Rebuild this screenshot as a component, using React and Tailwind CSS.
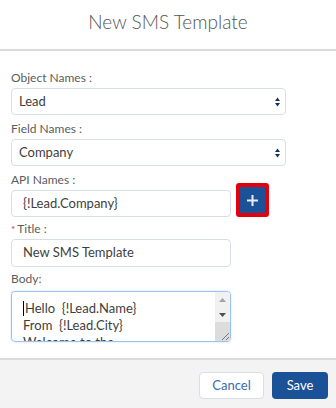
import React from "react";

const font = { fontFamily: 'Lato, "Open Sans", "Liberation Sans", sans-serif' };

function Arrows() {
  return (
    <svg width="5" height="10" viewBox="0 0 5 10" className="shrink-0">
      <path d="M2.5 0.5 L5 4 L0 4 Z" fill="#16325c" />
      <path d="M0 6 L5 6 L2.5 9.5 Z" fill="#16325c" />
    </svg>
  );
}

function Select({ value }) {
  return (
    <div className="h-[27px] w-[275px] flex items-center justify-between border border-[#d8dde6] rounded-[4px] bg-white pl-[7px] pr-[5px] text-[13px] text-[#3e3e3c]">
      <span>{value}</span>
      <Arrows />
    </div>
  );
}

function Label({ children }) {
  return <div className="h-[20px] leading-[20px] text-[12px] text-[#5c5c5c]">{children}</div>;
}

export default function App() {
  return (
    <div className="w-[336px] h-[408px] flex flex-col bg-white overflow-hidden" style={font}>
      <div className="h-[51px] shrink-0 flex items-center justify-center border-b-2 border-[#dddbda] pb-[5px]">
        <span className="text-[19px] font-light text-[#555555]">New SMS Template</span>
      </div>
      <div className="flex-1 pl-[11px] pt-[17px]">
        <Label>Object Names :</Label>
        <Select value="Lead" />
        <div className="mt-[4px]">
          <Label>Field Names :</Label>
        </div>
        <Select value="Company" />
        <div className="mt-[4px] flex items-end gap-[5px]">
          <div className="flex flex-col">
            <Label>API Names :</Label>
            <div className="h-[27px] w-[220px] flex items-center border border-[#d8dde6] rounded-[4px] pl-[11px] text-[13px] text-[#3e3e3c]">
              {"{!Lead.Company}"}
            </div>
          </div>
          <div className="w-[33px] h-[34px] rounded-[3px] bg-[#e3000b] p-[4px]">
            <div className="w-full h-full bg-[#1b5297] flex items-center justify-center">
              <svg width="11" height="11" viewBox="0 0 11 11">
                <path d="M5.5 0 V11 M0 5.5 H11" stroke="#e8ecf2" strokeWidth="2" />
              </svg>
            </div>
          </div>
        </div>
        <div className="mt-[2px]">
          <Label>
            <span className="text-[#c23934] text-[10px] mr-[2px] align-top">*</span>Title :
          </Label>
        </div>
        <div className="h-[28px] w-[220px] flex items-center border border-[#d8dde6] rounded-[4px] pl-[11px] text-[13px] text-[#3e3e3c]">
          New SMS Template
        </div>
        <div className="mt-[2px]">
          <Label>Body:</Label>
        </div>
        <div className="mt-[2px] h-[51px] w-[220px] flex border border-[#9fc3ee] rounded-[4px] overflow-hidden shadow-[0_0_2px_#b7d3f3]">
          <div className="flex-1 pl-[11px] pt-[8px] text-[13px] leading-[17px] text-[#3e3e3c] overflow-hidden whitespace-pre">
            <div className="flex items-center">
              <span className="inline-block w-px h-[15px] bg-black mr-px"></span>
              <span>{"Hello  {!Lead.Name}"}</span>
            </div>
            <div>{"From  {!Lead.City}"}</div>
            <div>{"Welcome to the"}</div>
          </div>
          <div className="w-[15px] flex flex-col bg-[#f1f1f1]">
            <div className="h-[15px] flex items-center justify-center">
              <svg width="7" height="4" viewBox="0 0 7 4"><path d="M3.5 0 L7 4 L0 4 Z" fill="#a3a3a3" /></svg>
            </div>
            <div className="h-[15px] flex items-center justify-center">
              <svg width="7" height="4" viewBox="0 0 7 4"><path d="M0 0 L7 0 L3.5 4 Z" fill="#505050" /></svg>
            </div>
            <div className="flex-1 bg-[#dcdcdc] flex items-end justify-end">
              <svg width="10" height="10" viewBox="0 0 10 10">
                <path d="M9 2 L2 9 M9 6 L6 9" stroke="#7a7a7a" strokeWidth="1" />
              </svg>
            </div>
          </div>
        </div>
      </div>
      <div className="h-[50px] shrink-0 border-t-2 border-[#dddbda] bg-[#f3f3f3] flex justify-end items-start pt-[12px] pr-[8px] gap-[8px]">
        <div className="w-[65px] h-[27px] flex items-center justify-center bg-white border border-[#d8dde6] rounded-[4px] text-[13px] text-[#3a6bb0]">
          Cancel
        </div>
        <div className="w-[56px] h-[27px] flex items-center justify-center bg-[#1b5297] rounded-[4px] text-[13px] text-white">
          Save
        </div>
      </div>
    </div>
  );
}
